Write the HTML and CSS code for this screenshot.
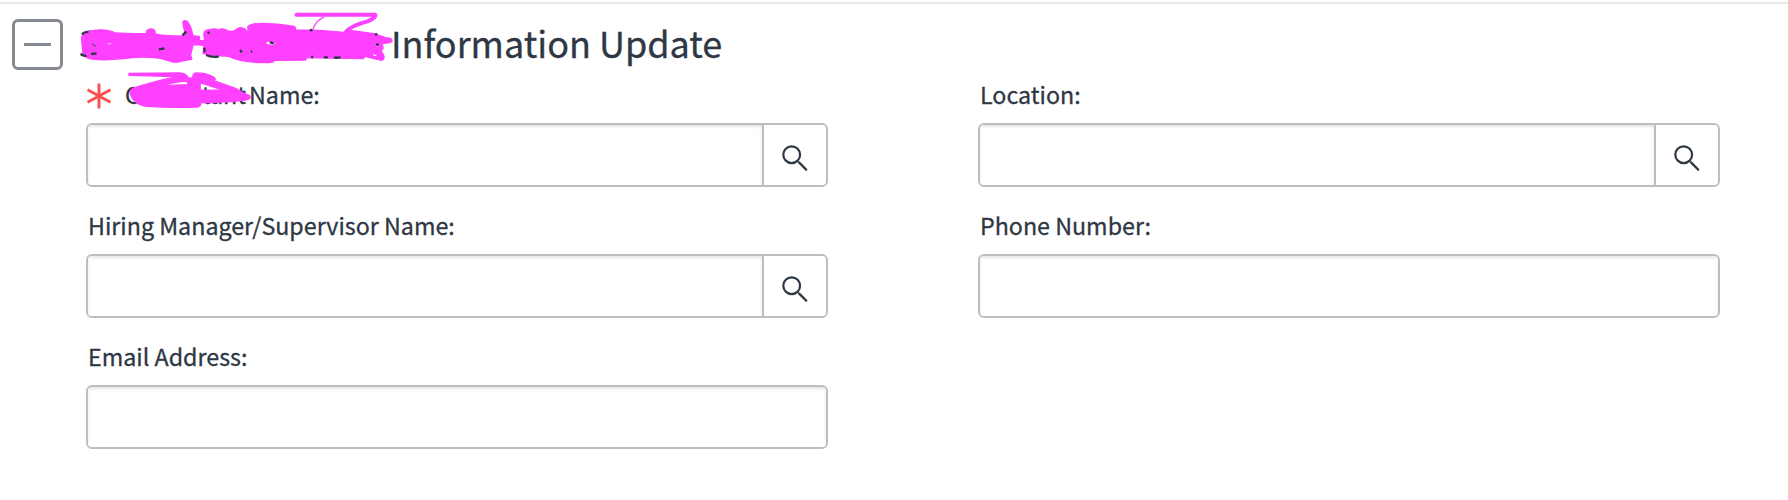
FILE: index.html
```
<!DOCTYPE html>
<html lang="en">
  <head>
    <meta charset="UTF-8" />
    <meta name="viewport" content="width=device-width, initial-scale=1.0" />
    <title>Information Update</title>
    <link rel="stylesheet" href="styles.css">
  </head>
  <body>
    <!-- Section header -->
    <header class="section-header">
      <button class="toggle" type="button" aria-label="Collapse section"></button>
      <h1>
        <span class="redacted redacted-title">
          <span>S</span>
          <svg class="scribble" viewBox="230 30 950 165" width="317" height="55">
            <path class="fill" fill-rule="evenodd" d="M243 112Q250 92 280 91Q318 86 345 99Q395 102 439 100Q435 88 452 87Q467 88 463 101Q478 108 555 108L547 68Q550 58 561 65Q571 75 577 107L597 110L597 122L612 122L610 100Q613 88 630 89Q643 84 655 90Q665 83 680 92Q695 98 706 89Q720 78 734 88L743 98L742 80Q750 69 790 70Q840 72 880 79Q889 84 883 90Q960 90 1030 97L1050 96L1098 106L1170 115Q1180 124 1168 128L1145 131L1148 145Q1138 152 1147 161Q1156 178 1143 181L1092 169L1089 176L1040 175L918 173L915 180L823 181Q818 189 790 188Q720 187 685 169L625 165L608 160L610 136L578 134L570 165L574 177L560 180L540 184Q525 189 510 184L480 175Q430 169 395 173Q320 182 282 178Q253 178 247 157ZM259 119Q276 136 294 151Q288 130 259 119ZM315 132Q325 125 341 131Q330 138 315 132ZM790 130Q808 118 826 128Q824 143 790 130ZM1120 133L1142 138L1128 142ZM1110 154L1137 170L1120 170Z" />
            <path class="line" d="M888 44H1124Q1128 53 1101 64Q1055 76 1037 94L1120 105L1165 121" />
            <path class="thin" d="M937 92Q942 64 969 52" />
            <path class="ink" d="M244 103Q253 94 264 96M240 162Q250 169 258 167M272 162L288 160M475 148L492 145M546 106L557 95M612 143V157M617 165Q635 174 655 169M622 100L626 96M808 127L820 130M719 150L724 157M751 155L755 154M928 90L936 91M932 171H938M970 172H982M1000 172Q1010 175 1020 171M1124 105L1130 101M1126 134H1135" />
          </svg>
        </span>
        <span>Information Update</span>
      </h1>
    </header>

    <!-- Form fields -->
    <form class="fields">
      <div class="field">
        <label for="personName">
          <svg class="required" viewBox="0 0 26 26" width="26" height="26">
            <path d="M13 0.5V25.5M1.5 6.7L24.5 19.3M24.5 6.7L1.5 19.3" />
          </svg>
          <span class="redacted redacted-label">
            <span>C</span><span class="label-end">tant</span>
            <svg class="scribble" viewBox="370 210 390 120" width="130" height="40">
              <path class="fill" fill-rule="evenodd" d="M388 220L540 219Q560 220 565 233L580 234Q577 220 590 219Q620 219 643 232Q651 239 642 242L710 266Q726 278 748 286Q756 293 746 298Q710 306 604 308Q603 320 592 321Q510 324 440 319Q408 312 398 295Q384 274 400 265Q455 246 532 230L388 226ZM485 257Q525 245 562 243L565 254ZM601 248L672 271Q630 270 602 271Z" />
            </svg>
          </span>
          <span>Name:</span>
        </label>
        <div class="control">
          <input id="personName" type="text" />
          <button class="search" type="button" aria-label="Search">
            <svg viewBox="0 0 26 26" width="26" height="26">
              <circle cx="9.7" cy="9.7" r="8.4" />
              <path d="M17 17.4L24.2 24.6" />
            </svg>
          </button>
        </div>
      </div>

      <div class="field">
        <label for="location">Location:</label>
        <div class="control">
          <input id="location" type="text" />
          <button class="search" type="button" aria-label="Search">
            <svg viewBox="0 0 26 26" width="26" height="26">
              <circle cx="9.7" cy="9.7" r="8.4" />
              <path d="M17 17.4L24.2 24.6" />
            </svg>
          </button>
        </div>
      </div>

      <div class="field">
        <label for="manager">Hiring Manager/Supervisor Name:</label>
        <div class="control">
          <input id="manager" type="text" />
          <button class="search" type="button" aria-label="Search">
            <svg viewBox="0 0 26 26" width="26" height="26">
              <circle cx="9.7" cy="9.7" r="8.4" />
              <path d="M17 17.4L24.2 24.6" />
            </svg>
          </button>
        </div>
      </div>

      <div class="field">
        <label for="phone">Phone Number:</label>
        <div class="control">
          <input id="phone" type="text" />
        </div>
      </div>

      <div class="field">
        <label for="email">Email Address:</label>
        <div class="control">
          <input id="email" type="text" />
        </div>
      </div>
    </form>
  </body>
</html>
```
FILE: styles.css
```
* {
  box-sizing: border-box;
}

body {
  margin: 0;
  padding-top: 2px;
  height: 500px;
  overflow: hidden;
  background: #fff;
  color: #2e3744;
  font-family: "Noto Sans CJK SC", "Noto Sans", sans-serif;
  -webkit-text-stroke: 0.3px #2e3744;
}

/* Section header */
.section-header {
  display: flex;
  height: 76px;
  padding: 15px 0 0 12px;
  border-top: 2px solid #e6e7e7;
}

.toggle {
  display: flex;
  align-items: center;
  justify-content: center;
  width: 51px;
  height: 51px;
  padding: 0;
  border: 3px solid #858b91;
  border-radius: 6px;
  background: #fff;
}

.toggle::before {
  content: "";
  width: 27px;
  height: 3px;
  background: #858b91;
}

h1 {
  display: flex;
  margin: 0 0 0 17px;
  font-size: 36px;
  font-weight: 400;
  line-height: 46px;
  white-space: nowrap;
}

/* Marked out words */
.redacted {
  position: relative;
  display: flex;
  justify-content: space-between;
}

.redacted-title {
  width: 311px;
}

.redacted-label {
  width: 124px;
  margin-left: 13px;
}

.label-end {
  padding-right: 3px;
}

.scribble {
  position: absolute;
  left: -3px;
  top: -9px;
}

.redacted-label .scribble {
  left: -2px;
  top: -8px;
}

.scribble .fill {
  fill: #ff40ff;
  stroke: #ff40ff;
  stroke-width: 4;
  stroke-linejoin: round;
}

.scribble .line,
.scribble .thin {
  fill: none;
  stroke: #ff40ff;
  stroke-width: 12;
  stroke-linecap: round;
  stroke-linejoin: round;
}

.scribble .thin {
  stroke-width: 4;
}

.scribble .ink {
  fill: none;
  stroke: #2e3744;
  stroke-width: 7;
}

/* Form layout */
.fields {
  display: grid;
  grid-template-columns: 742px 742px;
  column-gap: 150px;
  row-gap: 22px;
  padding-left: 86px;
}

label {
  display: flex;
  height: 32px;
  margin-bottom: 13px;
  padding-left: 2px;
  font-size: 23.25px;
  line-height: 32px;
  white-space: nowrap;
}

.required {
  margin: 5px 0 0 -2px;
  fill: none;
  stroke: #f95252;
  stroke-width: 3;
}

.control {
  display: flex;
  height: 64px;
  border: 2px solid #bdbebf;
  border-radius: 6px;
  overflow: hidden;
}

input {
  flex: 1;
  min-width: 0;
  padding: 0 16px;
  border: none;
  outline: none;
  background: #fff;
  box-shadow: inset 0 2px 3px rgba(0, 0, 0, 0.1);
  font: inherit;
}

.search {
  display: flex;
  width: 64px;
  padding: 20px 0 0 18px;
  border: none;
  border-left: 2px solid #bdbebf;
  background: #fff;
}

.search svg {
  fill: none;
  stroke: #2e3744;
  stroke-width: 2.2;
  stroke-linecap: round;
}
```
